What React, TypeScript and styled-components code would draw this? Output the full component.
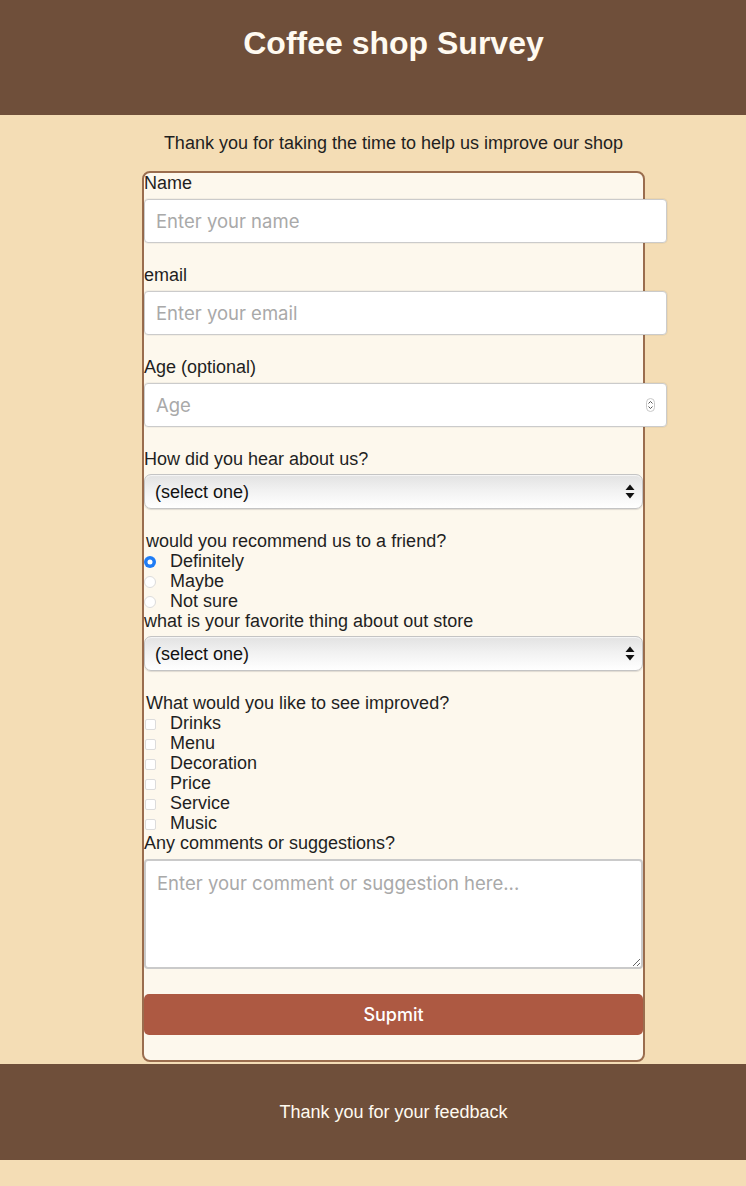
import React from 'react';
import styled, { createGlobalStyle } from 'styled-components';

const GlobalStyle = createGlobalStyle`
  html, body { margin: 0; padding: 0; background: #f4ddb5; }
  body {
    font-family: "Liberation Sans", Arial, Helvetica, sans-serif;
    color: #1f1f1f;
  }
  * { box-sizing: border-box; }
`;

const Header = styled.header`
  background: #6f4f3a;
  height: 115px;
  padding: 23px 0 0 41px;
`;

const Title = styled.h1`
  margin: 0;
  text-align: center;
  font-size: 32px;
  line-height: 40px;
  font-weight: 700;
  color: #fffaf0;
`;

const Main = styled.main`
  padding: 18px 0 0 41px;
  display: flex;
  flex-direction: column;
  align-items: center;
`;

const Intro = styled.p`
  margin: 0 0 18px;
  font-size: 18px;
  line-height: 20px;
  text-align: center;
`;

const Card = styled.form`
  width: 503px;
  background: #fdf8ed;
  border: 2px solid #9a6d4e;
  border-radius: 8px;
  padding: 0 0 25px;
  display: flex;
  flex-direction: column;
  align-items: stretch;
`;

const Label = styled.label`
  display: block;
  font-size: 18px;
  line-height: 20px;
`;

const InputWrap = styled.div`
  position: relative;
  margin: 6px 0 22px;
  width: calc(100% + 24px);
`;

const TextInput = styled.input`
  display: block;
  width: 100%;
  height: 44px;
  border: 1px solid #cbcbcb;
  border-radius: 4px;
  background: #fff;
  padding: 0 11px;
  font-family: Inter, "Noto Sans", sans-serif;
  font-size: 18.5px;
  color: #222;
  outline: none;
  box-shadow: 0 0 0 1px rgba(0, 0, 0, 0.04);
  &::placeholder { color: #a9a9a9; }
`;

const Spinner = styled.svg`
  position: absolute;
  right: 12px;
  top: 15px;
`;

const SelectWrap = styled.div<{ $top: number }>`
  position: relative;
  margin: ${(p) => p.$top}px 0 22px;
  height: 35px;
`;

const Select = styled.select`
  appearance: none;
  -webkit-appearance: none;
  display: block;
  width: 100%;
  height: 100%;
  border: 1px solid #c4c4c4;
  border-radius: 7px;
  background: linear-gradient(to bottom, #e2e2e2 0%, #f1f1f1 45%, #ffffff 100%);
  box-shadow: inset 0 1px 1px rgba(255, 255, 255, 0.7), 0 1px 1px rgba(0, 0, 0, 0.12);
  padding: 0 10px;
  font-family: "Liberation Sans", Arial, sans-serif;
  font-size: 18px;
  color: #111;
  outline: none;
`;

const Arrows = styled.svg`
  position: absolute;
  right: 8px;
  top: 10px;
  pointer-events: none;
`;

const Group = styled.fieldset`
  border: 0;
  margin: 0;
  padding: 0;
  min-width: 0;
`;

const Legend = styled.legend`
  padding: 0 2px;
  font-size: 18px;
  line-height: 20px;
`;

const Option = styled.label`
  display: flex;
  align-items: center;
  height: 20px;
  font-size: 18px;
  line-height: 20px;
`;

const Radio = styled.input`
  appearance: none;
  -webkit-appearance: none;
  width: 12px;
  height: 12px;
  margin: 2px 14px 0 0;
  border-radius: 50%;
  border: 1px solid #dcdcdc;
  background: #fff;
  &:checked {
    border: none;
    background: #fff;
    box-shadow: inset 0 0 0 3.5px #1f7cf4;
  }
`;

const Check = styled.input`
  appearance: none;
  -webkit-appearance: none;
  width: 11px;
  height: 11px;
  margin: 3px 14px 0 1px;
  border-radius: 2px;
  border: 1px solid #dcdcdc;
  background: #fff;
`;

const TextArea = styled.textarea`
  display: block;
  margin-top: 6px;
  width: 100%;
  height: 110px;
  border: 2px solid #cacaca;
  border-radius: 4px;
  background: #fff;
  padding: 10px 11px;
  font-family: Inter, "Noto Sans", sans-serif;
  font-size: 18.5px;
  line-height: 24px;
  outline: none;
  &::placeholder { color: #a9a9a9; }
`;

const Submit = styled.button`
  margin-top: 25px;
  height: 41px;
  width: 100%;
  border: 0;
  border-radius: 5px;
  background: #ad5942;
  color: #fff;
  font-family: Inter, "Noto Sans", sans-serif;
  font-size: 18px;
  font-weight: 500;
  cursor: pointer;
`;

const Footer = styled.footer`
  margin-top: 2px;
  background: #6f4f3a;
  height: 96px;
  padding-left: 41px;
  display: flex;
  align-items: center;
  justify-content: center;
`;

const FooterText = styled.p`
  margin: 0;
  font-size: 18px;
  line-height: 20px;
  color: #fffaf0;
`;

const SelectArrows = () => (
  <Arrows width="10" height="15" viewBox="0 0 10 15">
    <path d="M5 0.5 L9.5 6 L0.5 6 Z" fill="#111" />
    <path d="M0.5 9 L9.5 9 L5 14.5 Z" fill="#111" />
  </Arrows>
);

const App: React.FC = () => {
  const recommend = ['Definitely', 'Maybe', 'Not sure'];
  const improve = ['Drinks', 'Menu', 'Decoration', 'Price', 'Service', 'Music'];
  return (
    <>
      <GlobalStyle />
      <Header>
        <Title>Coffee shop Survey</Title>
      </Header>
      <Main>
        <Intro>Thank you for taking the time to help us improve our shop</Intro>
        <Card onSubmit={(e) => e.preventDefault()}>
          <Label htmlFor="name">Name</Label>
          <InputWrap>
            <TextInput id="name" type="text" placeholder="Enter your name" />
          </InputWrap>
          <Label htmlFor="email">email</Label>
          <InputWrap>
            <TextInput id="email" type="email" placeholder="Enter your email" />
          </InputWrap>
          <Label htmlFor="age">Age (optional)</Label>
          <InputWrap>
            <TextInput id="age" type="text" placeholder="Age" />
            <Spinner width="9" height="14" viewBox="0 0 9 14">
              <rect x="0.5" y="0.5" width="8" height="13" rx="4" fill="#fff" stroke="#c8c8c8" />
              <path d="M2.5 5.5 L4.5 3.5 L6.5 5.5" fill="none" stroke="#555" strokeWidth="1" />
              <path d="M2.5 8.5 L4.5 10.5 L6.5 8.5" fill="none" stroke="#555" strokeWidth="1" />
            </Spinner>
          </InputWrap>
          <Label htmlFor="hear">How did you hear about us?</Label>
          <SelectWrap $top={5}>
            <Select id="hear" defaultValue="">
              <option value="">(select one)</option>
              <option>Friends</option>
              <option>Social media</option>
              <option>Walking by</option>
            </Select>
            <SelectArrows />
          </SelectWrap>
          <Group>
            <Legend>would you recommend us to a friend?</Legend>
            {recommend.map((r, i) => (
              <Option key={r}>
                <Radio type="radio" name="recommend" defaultChecked={i === 0} />
                {r}
              </Option>
            ))}
          </Group>
          <Label htmlFor="fav">what is your favorite thing about out store</Label>
          <SelectWrap $top={5}>
            <Select id="fav" defaultValue="">
              <option value="">(select one)</option>
              <option>Drinks</option>
              <option>Atmosphere</option>
              <option>Staff</option>
            </Select>
            <SelectArrows />
          </SelectWrap>
          <Group>
            <Legend>What would you like to see improved?</Legend>
            {improve.map((r) => (
              <Option key={r}>
                <Check type="checkbox" />
                {r}
              </Option>
            ))}
          </Group>
          <Label htmlFor="comments">Any comments or suggestions?</Label>
          <TextArea id="comments" placeholder="Enter your comment or suggestion here..." />
          <Submit type="submit">Supmit</Submit>
        </Card>
      </Main>
      <Footer>
        <FooterText>Thank you for your feedback</FooterText>
      </Footer>
    </>
  );
};

export default App;
